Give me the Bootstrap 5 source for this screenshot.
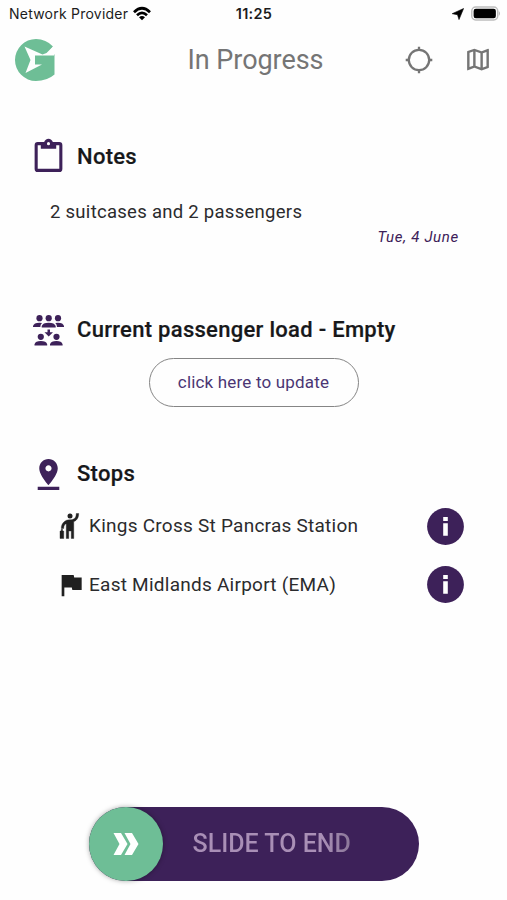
<!DOCTYPE html>
<html lang="en">
<head>
<meta charset="utf-8">
<meta name="viewport" content="width=device-width, initial-scale=1">
<title>In Progress</title>
<link href="https://cdn.jsdelivr.net/npm/bootstrap@5.3.0/dist/css/bootstrap.min.css" rel="stylesheet">
<style>
:root { --plum: #3d2159; --mint: #6ebe96; }
body { font-family: Roboto, "Liberation Sans", sans-serif; color: #2b2b2d; background: #fefefe; }
svg { display: block; flex: none; }
.screen { height: 900px; }
.status { height: 27px; padding: 0 6px 0 9px; font-family: Inter, sans-serif; font-size: 14px; color: #1c1c1c; }
.carrier { letter-spacing: .23px; }
.clock { font-weight: 600; font-size: 14.5px; letter-spacing: .3px; margin-left: -2px; }
.topbar { height: 65px; padding: 0 10px 0 14px; color: #757575; }
.page-title { font-size: 27px; line-height: 32px; letter-spacing: -.05px; margin-left: -4px; }
.icon-gap { gap: 26px; }
.section-head { padding-left: 30px; height: 40px; }
.section-head h2 { font-size: 22px; line-height: 30px; font-weight: 500; letter-spacing: .29px; color: #17181a; margin: 0 0 0 10px; -webkit-text-stroke: .2px; }
.plum { color: var(--plum); }
.note { font-size: 18.5px; line-height: 26px; padding-left: 50px; letter-spacing: .28px; }
.note-date { font-size: 15px; line-height: 20px; padding-right: 48px; letter-spacing: .7px; }
.btn-update { width: 210px; height: 49px; border: 1px solid #858585; color: #4b3674; font-size: 17px; letter-spacing: .18px; }
.stop { height: 58.6px; padding-left: 55px; padding-right: 43px; font-size: 19px; letter-spacing: .25px; }
.slide-track { width: 330px; height: 74px; background: var(--plum); }
.knob { width: 74px; height: 74px; background: var(--mint); box-shadow: 0 0 5px rgba(0,0,0,.35); }
.slide-label { font-size: 25px; font-weight: 500; margin-left: 30px; background: linear-gradient(90deg, #a98fb6 0 82%, #8b7799); -webkit-background-clip: text; background-clip: text; color: transparent; }
</style>
<script src="https://cdn.jsdelivr.net/npm/bootstrap@5.3.0/dist/js/bootstrap.bundle.min.js"></script>
</head>
<body>
<div class="screen d-flex flex-column overflow-hidden">
  <div class="status row g-0 align-items-center">
    <div class="col d-flex align-items-center gap-1">
      <span class="carrier text-nowrap">Network Provider</span>
      <svg width="20" height="16" viewBox="0 0 20 16" fill="none" stroke="#000" stroke-width="2.7"><path d="M2 6.2Q10-1.6 18 6.2M5 9.2Q10 4.6 15 9.2"/><path d="M10 14.2 7 11.3Q10 8.9 13 11.3Z" fill="#000" stroke="none"/></svg>
    </div>
    <div class="col-auto clock">11:25</div>
    <div class="col d-flex justify-content-end align-items-center" style="gap:7px">
      <svg width="12" height="12" viewBox="0 0 12 12"><path d="M11.6.5 7 11.6 5.5 6.7.2 5.7Z" stroke="#000" stroke-width=".6"/></svg>
      <svg width="30" height="15" viewBox="0 0 31 15"><rect x=".8" y=".8" width="26.8" height="13.4" rx="4" fill="#fff" stroke="#bdbdbd" stroke-width="1.5"/><rect x="2.7" y="2.7" width="23" height="9.6" rx="2.3"/><path d="M28.8 5q2 2.5 0 5Z" fill="#aaa"/></svg>
    </div>
  </div>

  <header class="topbar row g-0 align-items-center">
    <div class="col">
      <svg width="42" height="44" viewBox="0 0 42 44"><path d="M39 8.5 33 16.5H40.5V36.5Q33 43 22 43A21 21 0 0 1 22 1Q32 1 39 8.5Z" fill="#6ebe96"/><path d="M10.5 8.5 28.5 16.5 32.5 15 40 7.5V17.5H21V26.5H28L11.5 35 16.5 22Z" fill="#fefefe"/></svg>
    </div>
    <h1 class="page-title col-auto m-0 fw-normal">In Progress</h1>
    <div class="col d-flex justify-content-end align-items-center icon-gap">
      <svg width="28" height="28" viewBox="0 0 28 28" fill="none" stroke="currentColor" stroke-width="2.3"><circle cx="14" cy="14" r="10.2"/><path d="M14 .7V5M14 23V27.3M.7 14H5M23 14H27.3"/></svg>
      <svg width="38" height="29" viewBox="-3 0 30 24" fill="currentColor"><path d="M20.5 3l-.16.03L15 5.1 9 3 3.36 4.9c-.21.07-.36.25-.36.48V20.5c0 .28.22.5.5.5l.16-.03L9 18.9l6 2.1 5.64-1.9c.21-.07.36-.25.36-.48V3.5c0-.28-.22-.5-.5-.5zM10 5.47l4 1.4v11.66l-4-1.4V5.47zm-5 .99l3-1.01v11.7l-3 1.16V6.46zm14 11.08l-3 1.01V6.86l3-1.16v11.84z"/></svg>
    </div>
  </header>

  <main class="flex-grow-1">
    <section style="height:173px;margin-top:45px">
      <div class="section-head d-flex align-items-center">
        <svg class="plum" width="37" height="40" viewBox="0 0 24 24" preserveAspectRatio="none" fill="currentColor"><path d="M19 3H14.82C14.4 1.84 13.3 1 12 1S9.6 1.84 9.18 3H5A2 2 0 0 0 3 5V19A2 2 0 0 0 5 21H19A2 2 0 0 0 21 19V5A2 2 0 0 0 19 3M12 3A1 1 0 0 1 13 4 1 1 0 0 1 12 5 1 1 0 0 1 11 4 1 1 0 0 1 12 3M7 7H17V5H19V19H5V5H7V7Z"/></svg>
        <h2>Notes</h2>
      </div>
      <p class="note mb-0" style="margin-top:22px">2 suitcases and 2 passengers</p>
      <p class="note-date mb-0 text-end fst-italic plum" style="margin-top:2px">Tue, 4 June</p>
    </section>

    <section style="height:144px">
      <div class="section-head d-flex align-items-center">
        <svg class="plum" width="37" height="37" viewBox="0 0 37 37" fill="currentColor"><circle cx="9.5" cy="6.2" r="3.1"/><circle cx="18.7" cy="6.2" r="3.1"/><circle cx="28" cy="6.2" r="3.1"/><path d="M3 15V14Q3.8 10.8 9.5 10.7L12 11Q10.3 12.4 10.3 15ZM34 15V14Q33.2 10.8 28 10.7L25.3 11Q27 12.4 27 15ZM11.7 15.4V14Q12.7 10.8 18.7 10.7 24.6 10.8 25.7 14V15.4ZM17.5 17.5H20V20.3H23L18.7 24.4 14.5 20.3H17.5Z"/><circle cx="10.8" cy="24.8" r="3.1"/><circle cx="26.5" cy="24.8" r="3.1"/><path d="M4.5 33.5V32.3Q5.5 29 10.8 29 16.2 29 17.2 32.3V33.5ZM20 33.5V32.3Q21 29 26.5 29 31.6 29 32.6 32.3V33.5Z"/></svg>
        <h2>Current passenger load - Empty</h2>
      </div>
      <div class="d-flex justify-content-center" style="margin-top:8px">
        <button class="btn btn-update rounded-pill p-0" type="button">click here to update</button>
      </div>
    </section>

    <section>
      <div class="section-head d-flex align-items-center">
        <svg class="plum" width="37" height="37" viewBox="0 0 24 24" fill="currentColor"><path d="M18 8c0-3.31-2.69-6-6-6S6 4.69 6 8c0 4.5 6 11 6 11s6-6.5 6-11zm-8 0c0-1.1.9-2 2-2s2 .9 2 2-.89 2-2 2c-1.1 0-2-.9-2-2zM5 20v2h14v-2H5z"/></svg>
        <h2>Stops</h2>
      </div>
      <div class="stop d-flex align-items-center" style="margin-top:3px">
        <svg width="30" height="30" viewBox="0 0 24 24" fill="#202020"><circle cx="12" cy="4" r="2"/><path d="M17 2h2c0 2.7-.93 4.41-2.3 5.5-.5.4-1.1.7-1.7.9V22h-2v-6h-2v6H9V10.1c-.3.1-.5.2-.6.3C7.5 11.1 7 12 7 14H5c0-2.5.9-4.2 2.3-5.4C8.4 7.7 9.7 7 11.6 7c2 0 3-.2 3.9-1C16.5 5.2 17 3.9 17 2zM4 16h3v6H4zM5 14.5h1V16H5z" stroke="#202020" stroke-width=".3"/></svg>
        <span style="margin-left:4px">Kings Cross St Pancras Station</span>
        <svg class="ms-auto" width="37" height="37" viewBox="0 0 37 37"><circle cx="18.5" cy="18.5" r="18.4" fill="#3d2159"/><path d="M16.2 9.1h4.6v4h-4.6zM16.2 15.3h4.6v12.5h-4.6z" fill="#fff"/></svg>
      </div>
      <div class="stop d-flex align-items-center">
        <svg width="32" height="30" viewBox="0 0 24 24" preserveAspectRatio="none" fill="#202020"><path d="M14.4 6 14 4H5v17h2v-7h5.6l.4 2h7V6z"/></svg>
        <span style="margin-left:2px">East Midlands Airport (EMA)</span>
        <svg class="ms-auto" width="37" height="37" viewBox="0 0 37 37"><circle cx="18.5" cy="18.5" r="18.4" fill="#3d2159"/><path d="M16.2 9.1h4.6v4h-4.6zM16.2 15.3h4.6v12.5h-4.6z" fill="#fff"/></svg>
      </div>
    </section>
  </main>

  <footer class="d-flex justify-content-center" style="padding-bottom:19px">
    <div class="slide-track rounded-pill d-flex align-items-center">
      <div class="knob rounded-circle d-flex align-items-center justify-content-center">
        <svg width="26" height="22" viewBox="0 0 26 22" fill="#fff"><path d="M.5 0H8L14.5 11 8 22H.5L6.5 11ZM11.5 0H19L25.5 11 19 22H11.5L17.5 11Z"/></svg>
      </div>
      <span class="slide-label">SLIDE TO END</span>
    </div>
  </footer>
</div>
</body>
</html>
